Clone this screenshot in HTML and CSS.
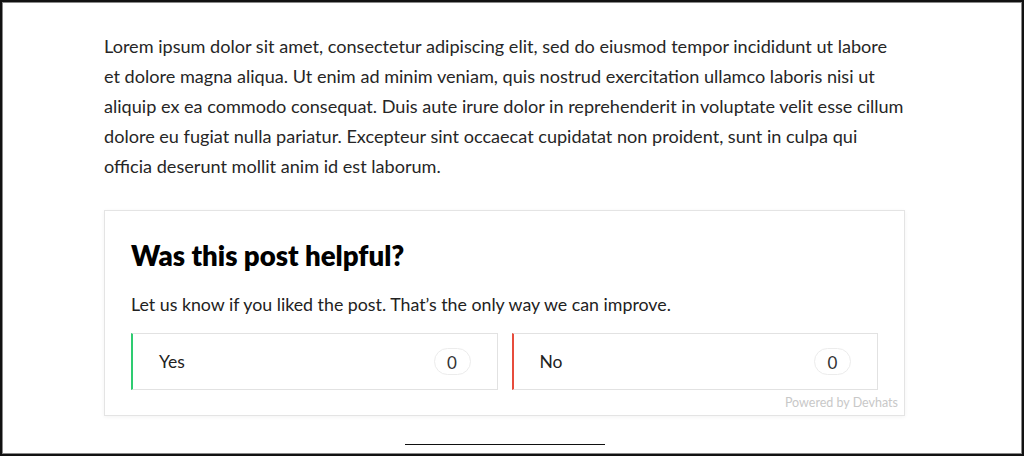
FILE: index.html
```html
<!DOCTYPE html>
<html lang="en">
  <head>
    <meta charset="UTF-8" />
    <meta name="viewport" content="width=device-width, initial-scale=1.0" />
    <title>Was this post helpful?</title>
    <link rel="stylesheet" href="styles.css">
  </head>
  <body>
    <div class="frame">
      <div class="content">
        <p class="text">
          Lorem ipsum dolor sit amet, consectetur adipiscing elit, sed do eiusmod tempor incididunt ut labore<br>
          et dolore magna aliqua. Ut enim ad minim veniam, quis nostrud exercitation ullamco laboris nisi ut<br>
          aliquip ex ea commodo consequat. Duis aute irure dolor in reprehenderit in voluptate velit esse cillum<br>
          dolore eu fugiat nulla pariatur. Excepteur sint occaecat cupidatat non proident, sunt in culpa qui<br>
          officia deserunt mollit anim id est laborum.
        </p>

        <div class="feedback">
          <h2>Was this post helpful?</h2>
          <p class="feedback-sub">Let us know if you liked the post. That’s the only way we can improve.</p>
          <div class="feedback-buttons">
            <button class="vote vote-yes" type="button">
              <span>Yes</span>
              <span class="count">0</span>
            </button>
            <button class="vote vote-no" type="button">
              <span>No</span>
              <span class="count">0</span>
            </button>
          </div>
          <div class="powered">Powered by Devhats</div>
        </div>

        <hr class="divider" />
      </div>
    </div>
  </body>
</html>
```

FILE: styles.css
```css
html,
body {
  margin: 0;
  background: #fff;
}
body {
  font-family: Lato, "Open Sans", sans-serif;
  color: #222;
}
.frame {
  box-sizing: border-box;
  height: 456px;
  border: 2px solid #111;
  box-shadow: inset 1px 1px 0 #888, inset -1px -1px 0 #888;
  overflow: hidden;
}
.content {
  width: 801px;
  margin-left: 102px;
  padding-top: 29px;
}
.text {
  margin: 0;
  font-size: 18.1px;
  line-height: 30px;
  white-space: nowrap;
  color: #262626;
}
.feedback {
  margin-top: 29px;
  border: 1px solid #e4e4e4;
  box-shadow: 0 1px 4px rgba(0, 0, 0, 0.05);
  padding: 25px 26px 1px 26px;
}
.feedback h2 {
  margin: 0;
  font-size: 27.6px;
  line-height: 40px;
  font-weight: 800;
  color: #000;
}
.feedback-sub {
  margin: 16px 0 0;
  font-size: 17.8px;
  line-height: 24px;
  color: #222;
}
.feedback-buttons {
  display: flex;
  gap: 14px;
  margin-top: 17px;
}
.vote {
  flex: 1;
  display: flex;
  justify-content: space-between;
  align-items: center;
  height: 57px;
  padding: 0 26px 0 26px;
  background: #fff;
  border: 1px solid #e2e2e2;
  font-family: inherit;
  font-size: 17.5px;
  color: #222;
  cursor: pointer;
}
.vote-yes {
  border-left: 2px solid #2ecc71;
}
.vote-no {
  border-left: 2px solid #e74c3c;
}
.count {
  display: inline-block;
  min-width: 37px;
  height: 27px;
  line-height: 27px;
  box-sizing: border-box;
  border: 1px solid #ececec;
  border-radius: 14px;
  text-align: center;
  font-size: 17px;
  color: #333;
}
.powered {
  margin-top: 2px;
  margin-right: -20px;
  text-align: right;
  font-size: 12.5px;
  line-height: 22px;
  color: #c8c8c8;
}
.divider {
  width: 200px;
  margin: 28px auto 0;
  border: 0;
  border-top: 1px solid #111;
}
```
